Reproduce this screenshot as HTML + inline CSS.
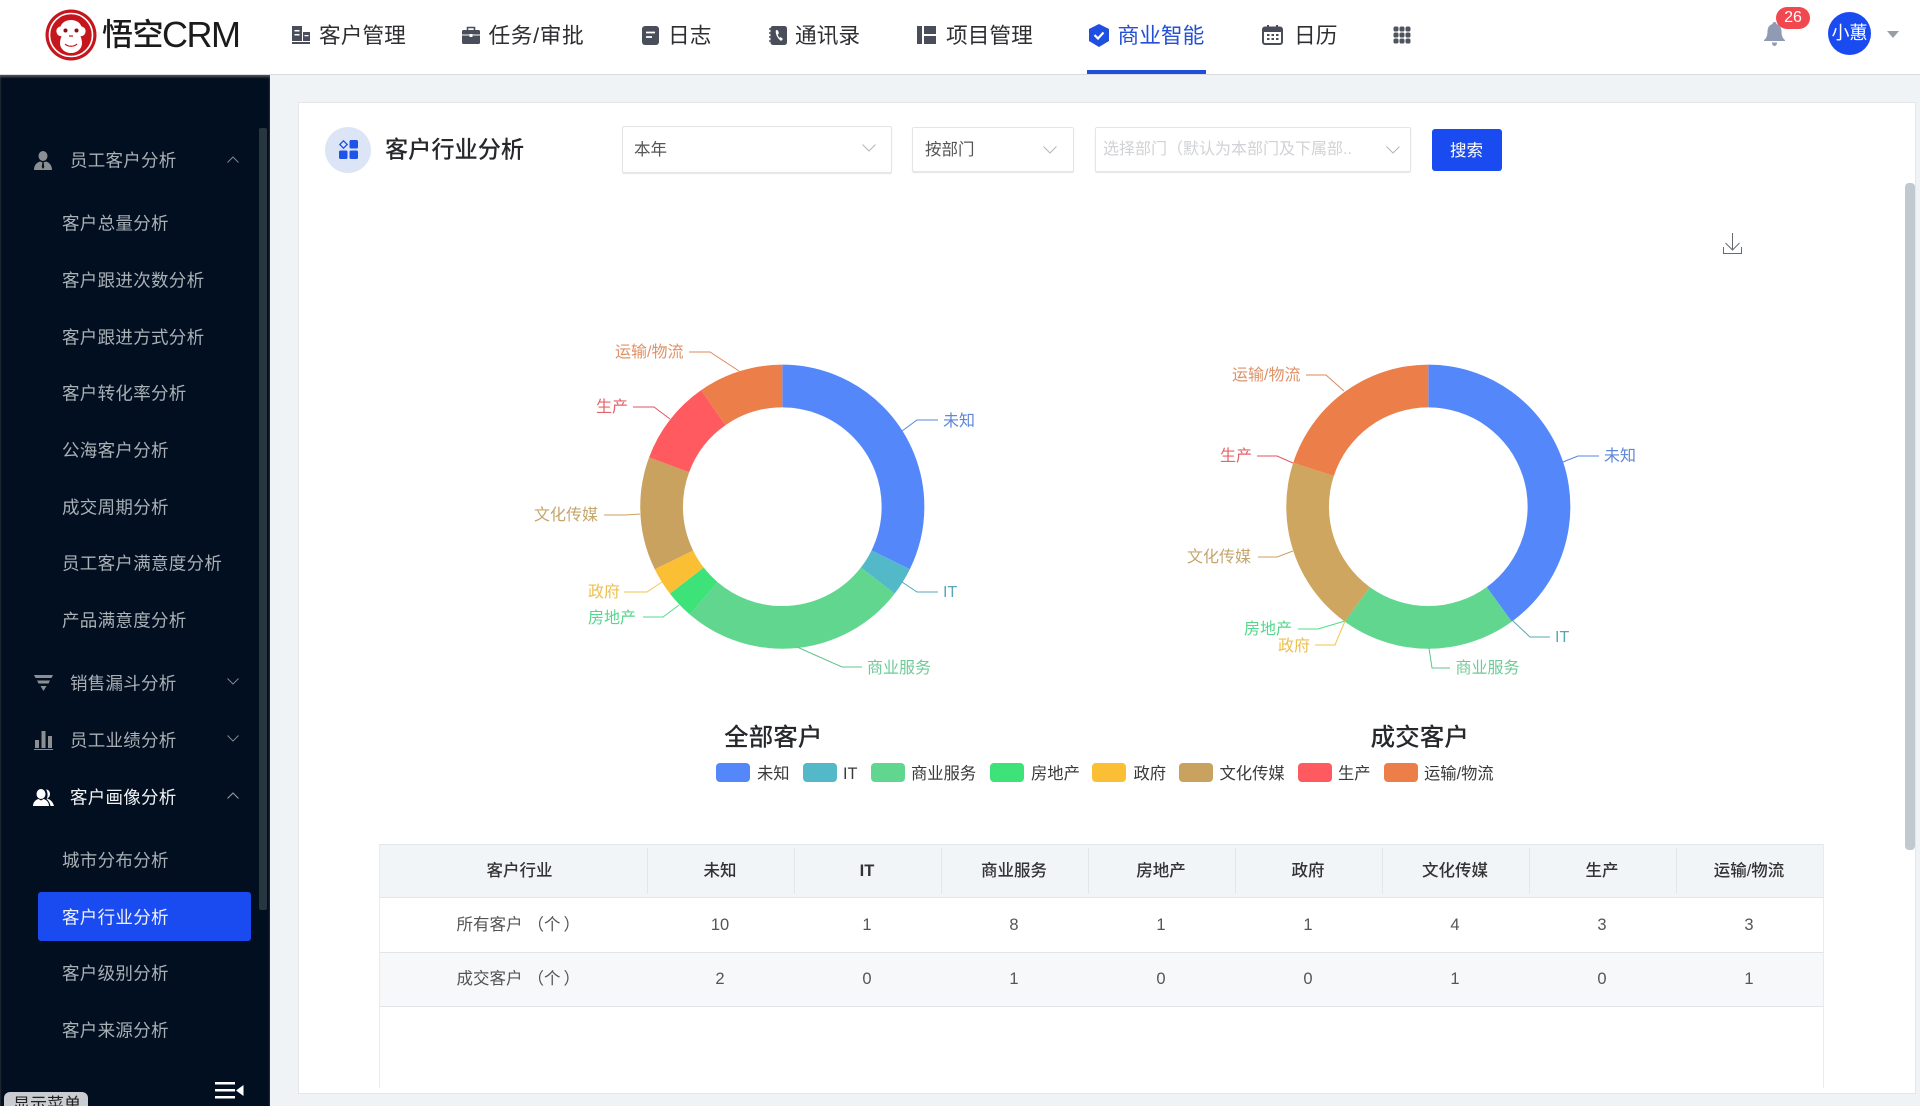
<!DOCTYPE html>
<html lang="zh-CN">
<head>
<meta charset="utf-8">
<title>客户行业分析</title>
<style>
html,body{margin:0;padding:0;width:1920px;height:1106px;overflow:hidden;background:#f0f3f6;font-family:"Liberation Sans","Noto Sans CJK SC",sans-serif;color:#333}
.t{position:absolute;white-space:nowrap;line-height:1;transform:translateY(-50%);margin-top:1px}
.c{position:absolute;white-space:nowrap;line-height:1;transform:translate(-50%,-50%);margin-top:1px}
.b{position:absolute;box-sizing:border-box}
svg{position:absolute;overflow:visible}
.nav{font-size:21.7px;color:#2e2f33}
.side{font-size:17.5px;letter-spacing:.25px;color:#a9afb5}
.sub{font-size:17.5px;letter-spacing:.3px;color:#a9b0b6}
.lab{font-size:16px}
.leg{font-size:16.3px;color:#3a3a3a}
.sw{position:absolute;top:763px;width:34px;height:19px;border-radius:4px}
.th{font-size:16.5px;font-weight:500;color:#333}
.td{font-size:16.5px;color:#555}
.sel{background:#fff;border:1px solid #e3e5e8;border-radius:2px;box-shadow:0 1px 1px #e5e5e5}
</style>
</head>
<body>
<!-- header -->
<div class="b" style="left:0;top:0;width:1920px;height:75px;background:#fff;border-bottom:1px solid #d9dbde"></div>
<svg style="left:45px;top:9px" width="52" height="52" viewBox="0 0 52 52">
<circle cx="26" cy="26" r="25.5" fill="#c5161d"/>
<circle cx="26" cy="26" r="21.5" fill="none" stroke="#fff" stroke-width="1.6"/>
<path d="M26 11c5 0 9 2.500 10.500 6.500 3 .5 4.500 3 4 5.500-.5 3-3 4.500-5 4 .5 2 1.500 4 1.500 7 0 6-5 10-11 10s-11-4-11-10c0-3 1-5 1.500-7-2 .5-4.500-1-5-4-.5-2.500 1-5 4-5.500C17 13.500 21 11 26 11z" fill="#fff"/>
<circle cx="20.500" cy="21.500" r="2" fill="#8c1015"/><circle cx="31.500" cy="21.500" r="2" fill="#8c1015"/>
<path d="M24 27h4M20 35c3 3 9 3 12 0" stroke="#c5161d" stroke-width="1.200" fill="none"/>
</svg>
<span class="t" style="left:102px;top:34px;font-size:31px;font-weight:500;color:#1b1b1b;letter-spacing:-.5px">悟空</span>
<span class="t" style="left:162px;top:34px;font-size:36px;color:#1b1b1b;letter-spacing:-1.500px">CRM</span>

<svg style="left:292px;top:26px" width="18" height="18" viewBox="0 0 18 18" fill="#4a4e5a"><path d="M0 0h10v15H0zM11 6h7v9h-7zM0 16h18v2H0z"/><path d="M2.500 4h5v1.500h-5zM2.500 8h5v1.500h-5zM12.500 9h4v1.300h-4z" fill="#fff"/></svg>
<span class="t nav" style="left:319px;top:34.500px">客户管理</span>
<svg style="left:462px;top:26px" width="18" height="18" viewBox="0 0 18 18"><path d="M5.500 4V1.500h7V4" fill="none" stroke="#4a4e5a" stroke-width="1.600"/><rect y="4" width="18" height="14" rx="1.500" fill="#4a4e5a"/><path d="M0 9h18" stroke="#fff"/><rect x="7.500" y="8" width="3" height="3" fill="#fff"/></svg>
<span class="t nav" style="left:488.5px;top:34.500px;letter-spacing:.6px">任务/审批</span>
<svg style="left:642px;top:26px" width="17" height="19" viewBox="0 0 17 19"><rect width="17" height="19" rx="3" fill="#4a4e5a"/><path d="M4 6.500h9M4 11h6" stroke="#fff" stroke-width="1.800"/></svg>
<span class="t nav" style="left:668px;top:34.500px">日志</span>
<svg style="left:769px;top:26px" width="18" height="19" viewBox="0 0 18 19"><rect x="1.500" width="16.500" height="19" rx="2.500" fill="#4a4e5a"/><path d="M0 3h3M0 7h3M0 11h3M0 15h3" stroke="#4a4e5a" stroke-width="1.600"/><path d="M7 4c-1 3 1 8 5 11l2-2-2.500-2-1 .7c-1-1-1.500-2.200-1.700-3.500l1.200-.7L9 4.500z" fill="#fff"/></svg>
<span class="t nav" style="left:795px;top:34.500px">通讯录</span>
<svg style="left:917px;top:26px" width="19" height="18" viewBox="0 0 19 18" fill="#4a4e5a"><rect width="5" height="18"/><rect x="7" width="12" height="8"/><rect x="7" y="10" width="12" height="8"/></svg>
<span class="t nav" style="left:946px;top:34.500px">项目管理</span>
<svg style="left:1089px;top:24px" width="20" height="23" viewBox="0 0 20 23"><path d="M10 0l10 5v12l-10 6-10-6V5z" fill="#1f4fe0"/><path d="M5.500 11l3.500 3.500 5.500-6" fill="none" stroke="#fff" stroke-width="2.200"/></svg>
<span class="t nav" style="left:1117.5px;top:34.500px;color:#2450d6">商业智能</span>
<div class="b" style="left:1087px;top:70px;width:119px;height:4px;background:#1f4fd8"></div>
<svg style="left:1262px;top:24px" width="21" height="21" viewBox="0 0 21 21"><rect x="1" y="3.500" width="19" height="16.500" rx="2" fill="none" stroke="#4a4e5a" stroke-width="2"/><path d="M1 4h19v4H1z" fill="#4a4e5a"/><path d="M6 1v4M15 1v4" stroke="#4a4e5a" stroke-width="2"/><path d="M5 11h2.500M9.500 11H12M14 11h2.500M5 15h2.500M9.500 15H12M14 15h2.500" stroke="#4a4e5a" stroke-width="2"/></svg>
<span class="t nav" style="left:1294px;top:34.500px">日历</span>
<svg style="left:1393px;top:26px" width="18" height="18" viewBox="0 0 18 18" fill="#4e5360"><rect x=".5" y=".5" width="5" height="5" rx="1.800"/><rect x="6.500" y=".5" width="5" height="5" rx="1.800"/><rect x="12.500" y=".5" width="5" height="5" rx="1.800"/><rect x=".5" y="6.500" width="5" height="5" rx="1.800"/><rect x="6.500" y="6.500" width="5" height="5" rx="1.800"/><rect x="12.500" y="6.500" width="5" height="5" rx="1.800"/><rect x=".5" y="12.500" width="5" height="5" rx="1.800"/><rect x="6.500" y="12.500" width="5" height="5" rx="1.800"/><rect x="12.500" y="12.500" width="5" height="5" rx="1.800"/></svg>

<svg style="left:1764px;top:22px" width="21" height="24" viewBox="0 0 21 24" fill="#8f9bb3"><path d="M10.500 0c1.200 0 2 .8 2 2 3.500 1 5 4 5 7.500 0 3.500 1 7 3.500 8.500v1H0v-1c2.500-1.500 3.500-5 3.500-8.500C3.500 6 5 3 8.500 2c0-1.200.8-2 2-2z"/><path d="M8 20.500h5c0 2-1 3.500-2.500 3.500S8 22.500 8 20.500z"/></svg>
<div class="b" style="left:1776px;top:7px;width:34px;height:22px;border-radius:11px;background:#f0484e"></div>
<span class="c" style="left:1793px;top:17px;font-size:16px;color:#fff">26</span>
<div class="b" style="left:1828px;top:12px;width:43px;height:43px;border-radius:50%;background:#1a4bf0"></div>
<span class="c" style="left:1849.500px;top:32px;font-size:18px;color:#fff;letter-spacing:0">小蕙</span>
<svg style="left:1887px;top:31px" width="12" height="7" viewBox="0 0 12 7"><path d="M0 0h12L6 7z" fill="#999ea5"/></svg>

<!-- sidebar -->
<div class="b" style="left:0;top:75px;width:270px;height:1031px;background:#020f20;box-shadow:inset 0 2px 2px #555"></div>
<div class="b" style="left:259px;top:128px;width:8px;height:782px;background:#28363f;border-radius:2px"></div>

<svg style="left:34px;top:151px" width="18" height="19" viewBox="0 0 18 19" fill="#8b8f93"><ellipse cx="9" cy="5" rx="4.500" ry="5"/><path d="M0 19c0-5 3-8 6.500-8.500L9 12l2.500-1.500C15 11 18 14 18 19z"/><path d="M8.300 12h1.400l.6 4-1.300 2-1.300-2z" fill="#111"/></svg>
<span class="t side" style="left:70px;top:159.500px">员工客户分析</span>
<svg style="left:227px;top:156px" width="12" height="7" viewBox="0 0 12 7"><path d="M.5 6.500L6 1l5.500 5.500" fill="none" stroke="#80868c"/></svg>
<span class="t sub" style="left:62px;top:222.500px">客户总量分析</span>
<span class="t sub" style="left:62px;top:279.500px">客户跟进次数分析</span>
<span class="t sub" style="left:62px;top:336.500px">客户跟进方式分析</span>
<span class="t sub" style="left:62px;top:393px">客户转化率分析</span>
<span class="t sub" style="left:62px;top:449.500px">公海客户分析</span>
<span class="t sub" style="left:62px;top:506.500px">成交周期分析</span>
<span class="t sub" style="left:62px;top:563px">员工客户满意度分析</span>
<span class="t sub" style="left:62px;top:619.500px">产品满意度分析</span>

<svg style="left:34px;top:675px" width="19" height="16" viewBox="0 0 19 16" fill="#8b8f93"><path d="M0 0h19l-1.500 3H1.500zM3 5.500h13l-1.500 3h-10zM6.500 11h6L9.500 16z"/></svg>
<span class="t side" style="left:70px;top:683px">销售漏斗分析</span>
<svg style="left:227px;top:678px" width="12" height="7" viewBox="0 0 12 7"><path d="M.5.500L6 6l5.500-5.500" fill="none" stroke="#80868c"/></svg>
<svg style="left:34px;top:731px" width="19" height="19" viewBox="0 0 19 19" fill="#8b8f93"><rect x="1" y="9" width="4" height="8"/><rect x="7.500" y="0" width="4" height="17"/><rect x="14" y="5" width="4" height="12"/><rect y="18" width="19" height="1"/></svg>
<span class="t side" style="left:70px;top:739.500px">员工业绩分析</span>
<svg style="left:227px;top:735px" width="12" height="7" viewBox="0 0 12 7"><path d="M.5.500L6 6l5.500-5.500" fill="none" stroke="#80868c"/></svg>
<svg style="left:33px;top:789px" width="21" height="17" viewBox="0 0 21 17" fill="#fff"><ellipse cx="8" cy="5" rx="4.500" ry="5"/><path d="M0 17c0-4 3-6.500 5.500-7L8 11.500 10.500 10c2.500.5 5.500 3 5.500 7z"/><path d="M13 .5c2.500 0 4 2 4 4.500s-1.500 4-3 4.500c3.500 1 6 3.500 7 7.500h-3.500c-.5-3-2-5.500-4-7 1.500-1.500 1.500-7 -.5-9.500z"/></svg>
<span class="t side" style="left:70px;top:796.500px;color:#f2f3f4">客户画像分析</span>
<svg style="left:227px;top:792px" width="12" height="7" viewBox="0 0 12 7"><path d="M.5 6.500L6 1l5.500 5.500" fill="none" stroke="#9ba0a5"/></svg>
<span class="t sub" style="left:62px;top:859.500px">城市分布分析</span>
<div class="b" style="left:38px;top:892px;width:213px;height:49px;background:#1a4bf0;border-radius:3px"></div>
<span class="t sub" style="left:62px;top:916.500px;color:#eef1f8">客户行业分析</span>
<span class="t sub" style="left:62px;top:972.500px">客户级别分析</span>
<span class="t sub" style="left:62px;top:1029.500px">客户来源分析</span>

<svg style="left:215px;top:1082px" width="29" height="17" viewBox="0 0 29 17" fill="#fff"><rect width="20" height="2.500"/><rect y="7" width="20" height="2.500"/><rect y="14" width="20" height="2.500"/><path d="M21 8.500L28.500 3v11z"/></svg>
<div class="b" style="left:4px;top:1092px;width:84px;height:14px;background:#c9ccd0;border-radius:6px 6px 0 0;overflow:hidden"><span style="position:absolute;left:9px;top:3px;font-size:17px;line-height:20px;color:#222;white-space:nowrap">显示菜单</span></div>

<!-- card -->
<div class="b" style="left:298px;top:102px;width:1618px;height:992px;background:#fff;border:1px solid #e4e6e9"></div>
<div class="b" style="left:1905px;top:183px;width:10px;height:667px;background:#c0c8d0;border-radius:4px"></div>

<div class="b" style="left:325px;top:127px;width:46px;height:46px;border-radius:50%;background:#dce5f6"></div>
<svg style="left:339px;top:140px" width="19" height="19" viewBox="0 0 19 19"><path d="M4.500.8L8.200 4.500 4.500 8.200.8 4.500z" fill="none" stroke="#1f52ea" stroke-width="1.300"/><rect x="10.500" y="0" width="8.500" height="8.500" rx="1.500" fill="#1f52ea"/><rect x="0" y="10.500" width="8.500" height="8.500" rx="1.500" fill="#1f52ea"/><rect x="10.500" y="10.500" width="8.500" height="8.500" rx="1.500" fill="#1f52ea"/></svg>
<span class="t" style="left:385px;top:148.500px;font-size:23.2px;font-weight:500;color:#26282c">客户行业分析</span>

<div class="b sel" style="left:622px;top:126px;width:270px;height:47px"></div>
<span class="t" style="left:634px;top:148.500px;font-size:16.500px;color:#555">本年</span>
<svg style="left:862px;top:144px" width="14" height="8" viewBox="0 0 14 8"><path d="M.5.500L7 7l6.500-6.500" fill="none" stroke="#b3b6ba"/></svg>
<div class="b sel" style="left:912px;top:127px;width:162px;height:45px"></div>
<span class="t" style="left:925px;top:148.500px;font-size:16.500px;color:#555">按部门</span>
<svg style="left:1043px;top:146px" width="14" height="8" viewBox="0 0 14 8"><path d="M.5.500L7 7l6.500-6.500" fill="none" stroke="#b3b6ba"/></svg>
<div class="b sel" style="left:1095px;top:127px;width:316px;height:45px"></div>
<span class="t" style="left:1103px;top:148.500px;font-size:16px;color:#d0d2d5">选择部门（默认为本部门及下属部..</span>
<svg style="left:1386px;top:146px" width="14" height="8" viewBox="0 0 14 8"><path d="M.5.500L7 7l6.500-6.500" fill="none" stroke="#b3b6ba"/></svg>
<div class="b" style="left:1432px;top:129px;width:70px;height:42px;background:#1a4bf0;border-radius:3px"></div>
<span class="c" style="left:1466.5px;top:149.5px;font-size:16.500px;color:#fff">搜索</span>

<svg style="left:1723px;top:233px" width="19" height="21" viewBox="0 0 19 21"><path d="M9.500 0v17M2.500 10l7 7 7-7M.5 14v6.500h18V14" fill="none" stroke="#666b72" stroke-width="1"/></svg>

<!-- donuts -->
<svg style="left:0;top:0" width="1920" height="1106" viewBox="0 0 1920 1106">
<g fill="none" stroke-width="42.700" transform="rotate(-90 782.300 506.700)">
<circle cx="782.300" cy="506.700" r="120.700" pathLength="31" stroke="#5488fa" stroke-dasharray="10 21" stroke-dashoffset="0"/>
<circle cx="782.300" cy="506.700" r="120.700" pathLength="31" stroke="#53b8c8" stroke-dasharray="1 30" stroke-dashoffset="-10"/>
<circle cx="782.300" cy="506.700" r="120.700" pathLength="31" stroke="#61d68f" stroke-dasharray="8 23" stroke-dashoffset="-11"/>
<circle cx="782.300" cy="506.700" r="120.700" pathLength="31" stroke="#3de278" stroke-dasharray="1 30" stroke-dashoffset="-19"/>
<circle cx="782.300" cy="506.700" r="120.700" pathLength="31" stroke="#fbbf35" stroke-dasharray="1 30" stroke-dashoffset="-20"/>
<circle cx="782.300" cy="506.700" r="120.700" pathLength="31" stroke="#c9a25f" stroke-dasharray="4 27" stroke-dashoffset="-21"/>
<circle cx="782.300" cy="506.700" r="120.700" pathLength="31" stroke="#ff5a5f" stroke-dasharray="3 28" stroke-dashoffset="-25"/>
<circle cx="782.300" cy="506.700" r="120.700" pathLength="31" stroke="#ec7e4a" stroke-dasharray="3 28" stroke-dashoffset="-28"/>
</g>
<g fill="none" stroke-width="1">
<path d="M689 352h21l29 19" stroke="#d98a5e"/>
<path d="M633 407h21l16 12" stroke="#e0565f"/>
<path d="M604 515h21l15-1" stroke="#c9a25f"/>
<path d="M624 592h23l15-10" stroke="#f3c34e"/>
<path d="M643 617h20l16-12" stroke="#4fdc88"/>
<path d="M862 667h-20l-45-20" stroke="#61c48f"/>
<path d="M938 420h-21l-15 11" stroke="#5a85e0"/>
<path d="M938 592h-21l-15-10" stroke="#53a8b8"/>
</g>
<path fill="#5488fa" d="M1428.3 364.65A142.05 142.05 0 0 1 1511.8 621.62L1486.7 587.07A99.35 99.35 0 0 0 1428.3 407.35Z"/>
<path fill="#61d68f" d="M1511.8 621.62A142.05 142.05 0 0 1 1344.8 621.62L1369.9 587.07A99.35 99.35 0 0 0 1486.7 587.07Z"/>
<path fill="#cfa660" d="M1344.8 621.62A142.05 142.05 0 0 1 1293.2 462.81L1333.81 476A99.35 99.35 0 0 0 1369.9 587.07Z"/>
<path fill="#ec7e4a" d="M1293.2 462.81A142.05 142.05 0 0 1 1428.3 364.65L1428.3 407.35A99.35 99.35 0 0 0 1333.81 476Z"/>
<g fill="none" stroke-width="1">
<path d="M1306 375h20l18 16" stroke="#d98a5e"/>
<path d="M1257 456h20l16 7" stroke="#e0565f"/>
<path d="M1258 557h19l16-6" stroke="#c9a25f"/>
<path d="M1298 629h20l27-8" stroke="#4fdc88"/>
<path d="M1315 645h20l10-24" stroke="#f3c34e"/>
<path d="M1450 668h-18l-3-20" stroke="#61c48f"/>
<path d="M1599 456h-21l-15 6" stroke="#5a85e0"/>
<path d="M1550 637h-20l-18-17" stroke="#53a8b8"/>
</g>
</svg>

<span class="t lab" style="left:615px;top:352px;color:#dd9167">运输/物流</span>
<span class="t lab" style="left:596px;top:407px;color:#e4636a">生产</span>
<span class="t lab" style="left:534px;top:515px;color:#c6a56c">文化传媒</span>
<span class="t lab" style="left:588px;top:592px;color:#eec04f">政府</span>
<span class="t lab" style="left:588px;top:618px;color:#55d68c">房地产</span>
<span class="t lab" style="left:867px;top:668px;color:#6ecb97">商业服务</span>
<span class="t lab" style="left:943px;top:421px;color:#5f87d8">未知</span>
<span class="t lab" style="left:943px;top:592px;color:#5aa5b5">IT</span>

<span class="t lab" style="left:1232px;top:375px;color:#dd9167">运输/物流</span>
<span class="t lab" style="left:1220px;top:456px;color:#e4636a">生产</span>
<span class="t lab" style="left:1187px;top:557px;color:#c6a56c">文化传媒</span>
<span class="t lab" style="left:1244px;top:629px;color:#55d68c">房地产</span>
<span class="t lab" style="left:1278px;top:646px;color:#eec04f">政府</span>
<span class="t lab" style="left:1455.5px;top:668px;color:#6ecb97">商业服务</span>
<span class="t lab" style="left:1604px;top:456px;color:#5f87d8">未知</span>
<span class="t lab" style="left:1555px;top:637px;color:#5aa5b5">IT</span>

<span class="t" style="left:724px;top:738px;font-size:24.6px;font-weight:500;color:#26282c">全部客户</span>
<span class="t" style="left:1370.5px;top:738px;font-size:24.6px;font-weight:500;color:#26282c">成交客户</span>

<!-- legend -->
<div class="sw" style="left:716px;background:#5488fa"></div><span class="t leg" style="left:757px;top:772.500px">未知</span>
<div class="sw" style="left:803px;background:#53b8c8"></div><span class="t leg" style="left:843px;top:772.500px">IT</span>
<div class="sw" style="left:871px;background:#61d68f"></div><span class="t leg" style="left:911px;top:772.500px">商业服务</span>
<div class="sw" style="left:990px;background:#3de278"></div><span class="t leg" style="left:1031px;top:772.500px">房地产</span>
<div class="sw" style="left:1092px;background:#fbbf35"></div><span class="t leg" style="left:1133.5px;top:772.500px">政府</span>
<div class="sw" style="left:1179px;background:#c9a25f"></div><span class="t leg" style="left:1219.5px;top:772.500px">文化传媒</span>
<div class="sw" style="left:1298px;background:#ff5a5f"></div><span class="t leg" style="left:1338px;top:772.500px">生产</span>
<div class="sw" style="left:1384px;background:#ec7e4a"></div><span class="t leg" style="left:1424px;top:772.500px">运输/物流</span>

<!-- table -->
<div class="b" style="left:379px;top:844px;width:1445px;height:244px;border-left:1px solid #e8eaec;border-right:1px solid #e8eaec"></div>
<div class="b" style="left:380px;top:844px;width:1443px;height:54px;background:#f2f5f8;border-top:1px solid #e4e7ea;border-bottom:1px solid #e4e7ea"></div>
<div class="b" style="left:380px;top:952px;width:1443px;height:55px;background:#f7f8f9;border-top:1px solid #e2e4e7;border-bottom:1px solid #e2e4e7"></div>
<div class="b" style="left:647px;top:848px;width:1px;height:46px;background:#e4e7ea"></div>
<div class="b" style="left:794px;top:848px;width:1px;height:46px;background:#e4e7ea"></div>
<div class="b" style="left:941px;top:848px;width:1px;height:46px;background:#e4e7ea"></div>
<div class="b" style="left:1088px;top:848px;width:1px;height:46px;background:#e4e7ea"></div>
<div class="b" style="left:1235px;top:848px;width:1px;height:46px;background:#e4e7ea"></div>
<div class="b" style="left:1382px;top:848px;width:1px;height:46px;background:#e4e7ea"></div>
<div class="b" style="left:1529px;top:848px;width:1px;height:46px;background:#e4e7ea"></div>
<div class="b" style="left:1676px;top:848px;width:1px;height:46px;background:#e4e7ea"></div>

<span class="c th" style="left:519.500px;top:870px">客户行业</span>
<span class="c th" style="left:720px;top:870px">未知</span>
<span class="c th" style="left:867px;top:870px;font-weight:700">IT</span>
<span class="c th" style="left:1014px;top:870px">商业服务</span>
<span class="c th" style="left:1161px;top:870px">房地产</span>
<span class="c th" style="left:1308px;top:870px">政府</span>
<span class="c th" style="left:1455px;top:870px">文化传媒</span>
<span class="c th" style="left:1602px;top:870px">生产</span>
<span class="c th" style="left:1749px;top:870px">运输/物流</span>

<span class="t td" style="left:456.5px;top:923.500px">所有客户<span style="margin-left:5px">（</span>个<span style="margin-left:3px">）</span></span>
<span class="c td" style="left:720px;top:923.500px">10</span>
<span class="c td" style="left:867px;top:923.500px">1</span>
<span class="c td" style="left:1014px;top:923.500px">8</span>
<span class="c td" style="left:1161px;top:923.500px">1</span>
<span class="c td" style="left:1308px;top:923.500px">1</span>
<span class="c td" style="left:1455px;top:923.500px">4</span>
<span class="c td" style="left:1602px;top:923.500px">3</span>
<span class="c td" style="left:1749px;top:923.500px">3</span>

<span class="t td" style="left:456.5px;top:977.500px">成交客户<span style="margin-left:5px">（</span>个<span style="margin-left:3px">）</span></span>
<span class="c td" style="left:720px;top:977.500px">2</span>
<span class="c td" style="left:867px;top:977.500px">0</span>
<span class="c td" style="left:1014px;top:977.500px">1</span>
<span class="c td" style="left:1161px;top:977.500px">0</span>
<span class="c td" style="left:1308px;top:977.500px">0</span>
<span class="c td" style="left:1455px;top:977.500px">1</span>
<span class="c td" style="left:1602px;top:977.500px">0</span>
<span class="c td" style="left:1749px;top:977.500px">1</span>
</body>
</html>
